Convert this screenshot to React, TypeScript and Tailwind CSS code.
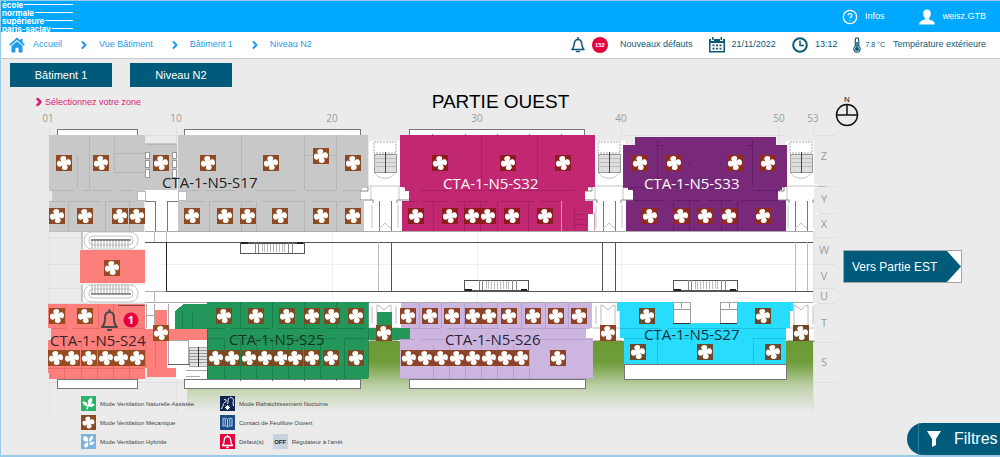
import React from 'react'
import { ChevronRight, CircleHelp } from 'lucide-react'

type Point = [number, number]

type Zone = {
  name: string
  fill: string
  wall: string
  ink: string
  label: Point
  areas: string[]
  walls: string
  fan: string
  fans: Point[]
}

// spreads one row of fans along x
const row = (y: number, xs: number[]): Point[] => xs.map((x) => [x, y])

const ZONES: Zone[] = [
  {
    name: 'CTA-1-N5-S17',
    fill: '#c8c8c8',
    wall: '#adadad',
    ink: '#222222',
    label: [162, 188],
    areas: [
      'M49 135H145V143H177V190H145V191H137V201H144V231H49V201H52V190H49Z',
      'M178 135H368V187H362V190H360V200H364V231H178V201H186V190H178Z',
    ],
    walls:
      'M89 136V190M114 136V172M114 153H145M114 172H145M77 155V188M49 190H75M82 190H112M120 190H134M49 201H65M69 201H100M108 201H135M68 201V231M105 201V231M129 201V231M178 190H198M205 190H236M255 190H295M306 190H335M343 190H362M186 201H205M212 201H254M262 201H303M312 201H352M209 201V231M241 135V190M241 201V231M256 201V231M304 135V190M304 201V231M336 135V190M336 201V231M304 155H336M178 231H364M49 231H144M146 144H177',
    fan: '#8d4a24',
    fans: [
      ...row(163, [64, 101, 161, 208, 271, 353]),
      [321, 156],
      ...row(216, [57, 85, 120, 137, 192, 225, 248, 280, 321, 353]),
    ],
  },
  {
    name: 'CTA-1-N5-S32',
    fill: '#c22771',
    wall: '#9e1a5b',
    ink: '#ffffff',
    label: [443, 189],
    areas: ['M400 135H595V187H588V191H585V201H593V214H588V231H402V201H409V191H405V187H400Z'],
    walls:
      'M481 135V190M537 135V190M420 190H450M458 190H510M518 190H575M402 201H418M423 201H450M458 201H490M500 201H535M541 201H560M433 201V231M464 201V231M480 201V231M497 201V231M528 201V231M432 134V137M465 134V137M497 134V137M529 134V137M561 134V137M574 207V231M574 214H586M574 219H586M574 224H586',
    fan: '#8e1c1f',
    fans: [...row(163, [440, 508, 563]), ...row(216, [416, 450, 472, 488, 512, 545])],
  },
  {
    name: 'CTA-1-N5-S33',
    fill: '#79297a',
    wall: '#5b1a5e',
    ink: '#ffffff',
    label: [644, 189],
    areas: ['M635 137H776V145H787V187H782V190H778V201H786V231H626V201H633V190H628V187H623V145H635Z'],
    walls:
      'M657 140V186M657 145H664M752 140V186M752 145H747M623 187H650M660 187H690M700 187H740M752 190H780M626 200H665M673 200H700M707 200H733M741 200H786M673 200V231M689 200V231M721 200V231M737 200V231M689 163V166M721 163V166',
    fan: '#8e2a1e',
    fans: [...row(163, [640, 674, 735, 768]), ...row(216, [650, 681, 705, 729, 763])],
  },
  {
    name: 'CTA-1-N5-S24',
    fill: '#fc7f7c',
    wall: '#e06462',
    ink: '#3a2424',
    label: [50, 346],
    areas: [
      'M80 250H145V283H80Z',
      'M48 304H145V329H155V310H167V329H208V340H167V368H176V377H147V368H145V379H49V373H48V340H51V328H48Z',
    ],
    walls:
      'M65 304V328M98 304V328M113 304V328M51 328H66M72 328H100M107 328H145M64 343V379M81 343V379M97 343V379M113 343V379M129 343V379M145 340V368M155 340V368M48 368H145',
    fan: '#964b20',
    fans: [
      [112, 268],
      ...row(316, [57, 85]),
      [161, 333],
      ...row(358, [56, 72, 89, 106, 121, 137]),
    ],
  },
  {
    name: 'CTA-1-N5-S25',
    fill: '#23975a',
    wall: '#147343',
    ink: '#163224',
    label: [229, 345],
    areas: ['M175 311L184 304H207V302H368V328H377V312H392V328H410V340H368V379H207V329H175Z'],
    walls:
      'M240 302V328M272 302V328M304 302V328M336 302V328M207 328H225M231 328H270M277 328H320M327 328H366M207 338H225M233 338H275M290 338H335M343 338H366M224 340V378M240 340V378M256 340V378M272 340V378M288 340V378M304 340V378M320 340V378M344 340V378M207 328V378M368 302V378M182 311V328M192 311V328M240 378V381M272 378V381M304 378V381M336 378V381',
    fan: '#7c4a22',
    fans: [
      ...row(316, [224, 256, 287, 312, 332, 356]),
      ...row(358, [216, 232, 249, 265, 281, 295, 312, 331, 356]),
      [384, 333],
    ],
  },
  {
    name: 'CTA-1-N5-S26',
    fill: '#ccb6e0',
    wall: '#ad97c3',
    ink: '#2b2433',
    label: [445, 345],
    areas: ['M401 303H592V328H586V338H593V379H400V339H410V328H401Z'],
    walls:
      'M419 303V328M441 303V328M464 303V328M481 303V328M497 303V328M521 303V328M545 303V328M568 303V328M410 328H440M447 328H500M508 328H590M400 339H415M421 339H445M540 339H593M433 345V378M449 345V378M465 345V378M481 345V378M497 345V378M513 345V378M529 345V378M400 378H593',
    fan: '#8d4327',
    fans: [
      ...row(316, [408, 430, 452, 473, 489, 509, 533, 556, 579]),
      ...row(358, [409, 425, 441, 457, 473, 489, 505, 521, 558]),
      [608, 333],
    ],
  },
  {
    name: 'CTA-1-N5-S27',
    fill: '#28dcfd',
    wall: '#14b4d6',
    ink: '#14313a',
    label: [644, 340],
    areas: ['M617 302H673V323H737V302H793V311H790V328H786V364H624V338H620V311H617Z'],
    walls: 'M620 328H660M668 328H786M624 338H690M700 338H735M657 340V364M753 340V364M752 338H786',
    fan: '#6b4a2c',
    fans: [...row(316, [647, 763]), ...row(352, [638, 705, 773]), [801, 333]],
  },
]

const COLUMNS: [string, number][] = [
  ['01', 48],
  ['10', 176],
  ['20', 332],
  ['30', 477],
  ['40', 621],
  ['50', 779],
  ['53', 813],
]

const ROWS: [string, number][] = [
  ['Z', 160],
  ['Y', 203],
  ['X', 228],
  ['W', 254],
  ['V', 280],
  ['U', 300],
  ['T', 327],
  ['S', 366],
]

const BLADE = 'M0 .5C-1.600 -1 -4 -2.200 -3.700 -4.700C-3.400 -7 .2 -7.800 1.700 -6.300C3 -5 1.300 -3.400 1.500 -1.500Z'

const Fan = ({ x, y, fill }: { x: number; y: number; fill: string }) => (
  <g transform={`translate(${x} ${y})`}>
    <rect x="-8" y="-8" width="16" height="16" fill={fill} />
    {[0, 90, 180, 270].map((angle) => (
      <path key={angle} d={BLADE} transform={`rotate(${angle})`} fill="#fff" />
    ))}
  </g>
)

// white lift and stair block between two zones of the north wing
const NorthCore = ({ x }: { x: number }) => (
  <g transform={`translate(${x} 0)`} stroke="#c4c4c4" fill="none">
    <path d="M-16 135H16V187H26V200H18V231H-18V200H-26V187H-16Z" fill="#fff" stroke="none" />
    <path d="M-16 135H16V141H-16Z" fill="#ebebeb" stroke="none" />
    <rect x="-11" y="142" width="22" height="11" stroke="#aaa" strokeDasharray="2 1" />
    <path d="M-11 154H11V172H-11Z" fill="#dedede" stroke="#999" shapeRendering="crispEdges" />
    <path d="M-11 158H11M-11 162H11M-11 166H11" stroke="#bbb" shapeRendering="crispEdges" />
    <path d="M0 152V173" stroke="#444" shapeRendering="crispEdges" />
    <path d="M-10 173A11 9 0 0 0 10 173M-16 186H16M-14 187V200M14 187V200" />
    <path d="M-24 187H-17V191H-25V200H-12V203M17 187H24V191H25V200H12V203" stroke="#888" />
    <path d="M-6 201V231M6 201V231" stroke="#777" shapeRendering="crispEdges" />
    <path d="M-6 228Q-2 226 0 223Q2 226 6 228M-13 205V228M13 205V228" />
  </g>
)

const SouthCore = ({ x }: { x: number }) => (
  <g transform={`translate(${x} 0)`} fill="none" stroke="#bbb">
    <path d="M-16 303H16V341H-16Z" fill="#fff" stroke="none" />
    <path d="M-7 305V328M7 305V328M-12 306V324M12 306V324M-7 305Q-3 306 0 310Q3 306 7 305M-15 328H15" />
    <path d="M-14 341H-8M8 341H14" stroke="#777" />
  </g>
)

const Escalator = ({ x, y, flip = false }: { x: number; y: number; flip?: boolean }) => (
  <g transform={`translate(${x} ${y})`} fill="none">
    <rect width="64" height="10" fill="#fff" stroke="#555" />
    <path d="M15 0V10M18 0V10M48 0V10M52 0V10" stroke="#888" />
    <path d="M22 1V9M24 1V9M27 1V9M30 1V9M33 1V9M36 1V9M39 1V9M42 1V9M44 1V9" stroke="#bbb" />
    <path d={flip ? 'M1 0H8M57 0H63' : 'M1 10H8M57 10H63'} stroke="#222" strokeWidth="2" />
  </g>
)

const WestStair = ({ y, dark }: { y: number; dark: number }) => (
  <g fill="none" stroke="#c4c4c4">
    <path d={`M82 ${y}V${y + 17}H145V${y}Z`} fill="#fff" stroke="none" />
    <rect x="84" y={y} width="54" height="17" rx="8" />
    <rect x="89" y={y + 4} width="44" height="9" rx="4" />
    <path
      d="M92 0V9M95 0V9M98 0V9M101 0V9M104 0V9M107 0V9M110 0V9M113 0V9M116 0V9M119 0V9M122 0V9M125 0V9M128 0V9"
      transform={`translate(0 ${dark > y + 8 ? y : y + 7})`}
      stroke="#aaa"
    />
    <path d={`M91 ${dark}H131`} stroke="#333" />
    <path d={`M82 ${y}V${y + 17}`} stroke="#999" />
  </g>
)

const FloorPlan = () => (
  <svg
    viewBox="1 112 835 300"
    className="block w-full"
    role="img"
    aria-label="Plan du niveau N2, partie ouest"
    fontFamily="'Open Sans', 'Noto Sans', sans-serif"
  >
    <defs>
      <linearGradient id="garden" x1="0" y1="0" x2="0" y2="1">
        <stop offset="0" stopColor="#6b9a33" />
        <stop offset=".3" stopColor="#6f9d3b" />
        <stop offset=".65" stopColor="#c0d2ab" />
        <stop offset="1" stopColor="#ebebeb" />
      </linearGradient>
    </defs>

    <g shapeRendering="crispEdges">
      <path
        d="M49 127V412M176 127V412M332 127V412M477 127V412M621 127V412M779 127V412M813 127V412M48 135H836M48 186H836M48 213H836M48 237H836M48 264H836M48 288H836M48 303H836M48 342H836M48 382H836"
        stroke="#e0e0e0"
      />
      <rect x="187" y="341" width="626" height="71" fill="url(#garden)" />

      {/* atrium slab between both wings */}
      <path d="M145 187H813V303H145Z M145 303H813V340H145Z" fill="#fff" />
      <path d="M158 264H813M332 231V303M477 231V303M621 242V303" stroke="#efefef" />
      <path d="M145 231H813" stroke="#aaa" />
      <path d="M145 242H813M166 291H813" stroke="#555" />
      <path d="M145 291H166M145 302H813" stroke="#aaa" />
      <path d="M166 242V291" stroke="#222" />
      <path d="M602 242V291M615 242V291M391 242V291" stroke="#555" />
      <path d="M378 242V291M795 242V291M807 242V291M154 231V242M154 291V303M166 231V242" stroke="#bbb" />

      {/* balconies */}
      <path
        d="M57 129H137V135H57ZM184 129H360V135H184ZM409 129H584V135H409ZM57 379H137V388H57ZM184 379H360V388H184ZM409 379H585V388H409ZM624 364H786V379H624Z"
        fill="#fff"
        stroke="#777"
      />
    </g>

    <NorthCore x={385} />
    <NorthCore x={609} />
    <NorthCore x={801} />
    <rect x="814" y="138" width="22" height="46" fill="#ebebeb" />
    <rect x="814" y="187" width="22" height="26" fill="#ebebeb" />
    <rect x="814" y="214" width="22" height="22" fill="#ebebeb" />
    <SouthCore x={384} />
    <SouthCore x={608} />
    <SouthCore x={801} />
    <rect x="814" y="304" width="22" height="37" fill="#ebebeb" />
    <WestStair y={232} dark={240} />
    <WestStair y={285} dark={294} />

    {/* stair tower of the south-west corner */}
    <g fill="none" stroke="#aaa" shapeRendering="crispEdges">
      <path d="M145 303H208V379H176V368H167V340H145Z" fill="#fff" stroke="none" />
      <path d="M146 304V328M154 304V328M146 315H154M168 304V328M168 340H188V364H168Z" />
      <path d="M189 347H198V366H189ZM198 347H207V366H198Z" fill="#e2e2e2" />
      <path d="M189 350H207M189 353H207M189 356H207M189 359H207M189 362H207" stroke="#999" />
      <path d="M198 347V367" stroke="#333" />
      <path d="M168 364H190" stroke="#666" />
      <path d="M186 370H207M186 376H200" />
    </g>

    {ZONES.map((zone) => (
      <g key={zone.name}>
        {zone.areas.map((area) => (
          <path key={area} d={area} fill={zone.fill} shapeRendering="crispEdges" />
        ))}
        <path d={zone.walls} fill="none" stroke={zone.wall} strokeWidth="1" opacity=".7" shapeRendering="crispEdges" />
      </g>
    ))}

    {/* lifts and doors cut out of the zones */}
    <g fill="#fff" stroke="#999" shapeRendering="crispEdges">
      <path d="M137 191H186V200H178V231H145V200H137Z" stroke="none" />
      <path d="M137 191H145V200H137ZM178 191H186V200H178Z" stroke="#bbb" />
      <path d="M155 201V231M167 201V231M145 201H155M167 201H178" fill="none" stroke="#777" />
      <path d="M145 152H149V158H145ZM145 160H149V167H145ZM145 169H149V177H145ZM172 152H176V158H172ZM172 160H176V167H172ZM172 169H176V177H172Z" />
      <path d="M673 303V323H690V303M673 309H690M681 303V308M720 303V323H737V303M720 309H737M729 303V308" />
      <path d="M691 302H720V323H691Z" stroke="none" />
      <path d="M561 201V231M594 213V231" stroke="#c9a0b4" />
      <path d="M673 323H690M720 323H737" stroke="#333" />
      <path d="M118 305H145" stroke="#7a4a4a" />
    </g>

    <g shapeRendering="crispEdges">
      <Escalator x={240} y={243} flip />
      <Escalator x={464} y={280} />
      <Escalator x={673} y={280} />
    </g>

    {ZONES.map((zone) => (
      <g key={zone.name}>
        {zone.fans.map(([x, y]) => (
          <Fan key={`${x}-${y}`} x={x} y={y} fill={zone.fan} />
        ))}
        <text x={zone.label[0]} y={zone.label[1]} fontSize="15" fill={zone.ink}>
          {zone.name}
        </text>
      </g>
    ))}

    <g stroke="#4a4a4a" strokeWidth="2" fill="none" strokeLinejoin="round" strokeLinecap="round">
      <path d="M102 327H117C115 325 114 323 114 318C114 314 112 312 109.500 312C107 312 105 314 105 318C105 323 104 325 102 327Z" />
      <path d="M109.500 310V312M108 330H111" />
    </g>
    <circle cx="131" cy="320" r="7.500" fill="#e3003c" />
    <text x="131" y="324" fontSize="11" fontWeight="700" fill="#fff" textAnchor="middle">
      1
    </text>

    <g fontSize="10" fill="#9b9b9b" textAnchor="middle">
      {COLUMNS.map(([label, x]) => (
        <text key={label} x={x} y="122">
          {label}
        </text>
      ))}
      {ROWS.map(([label, y]) => (
        <text key={label} x="824" y={y} fontSize="11">
          {label}
        </text>
      ))}
    </g>
  </svg>
)

const BellIcon = ({ className }: { className?: string }) => (
  <svg viewBox="0 0 16 16" className={className} fill="none" stroke="currentColor" strokeWidth="1.500" strokeLinejoin="round" aria-hidden="true">
    <path d="M2 12.500C3.800 11 4 9 4.300 6.500C4.600 4 6 2.500 8 2.500S11.400 4 11.700 6.500C12 9 12.200 11 14 12.500Z" />
    <path d="M8 .5V2.500M6.500 14.500H9.500" strokeLinecap="round" />
  </svg>
)

const HomeIcon = () => (
  <svg viewBox="0 0 16 16" className="size-4" fill="currentColor" aria-hidden="true">
    <path d="M8 .6L.2 7.600L1.300 8.800L8 3L14.700 8.800L15.800 7.600L13.600 5.600V2H11.400V3.600Z" />
    <path d="M8 4.300L2.500 9.100V15.400H6.400V10.800H9.600V15.400H13.500V9.100Z" />
  </svg>
)

const UserIcon = () => (
  <svg viewBox="0 0 16 16" className="size-4" fill="currentColor" aria-hidden="true">
    <path d="M8 .5C10.600 .5 12 2.300 11.800 4.800C11.700 6.800 10.900 8.400 9.900 9.200V10.600C12.300 11.300 15.800 12.200 15.800 15.500H.2C.2 12.200 3.700 11.300 6.100 10.600V9.200C5.100 8.400 4.300 6.800 4.200 4.800C4 2.300 5.400 .5 8 .5Z" />
  </svg>
)

const CalendarIcon = () => (
  <svg viewBox="0 0 16 16" className="size-4" aria-hidden="true">
    <path fill="currentColor" fillRule="evenodd" d="M0 2H2V4H5V2H11V4H14V2H16V15.500H0ZM1.500 6V14H14.500V6Z" />
    <path fill="currentColor" d="M3 0H4.500V3H3ZM11.500 0H13V3H11.500ZM3.500 7.500H5.500V9.300H3.500ZM7 7.500H9V9.300H7ZM10.500 7.500H12.500V9.300H10.500ZM3.500 10.700H5.500V12.500H3.500ZM7 10.700H9V12.500H7ZM10.500 10.700H12.500V12.500H10.500Z" />
  </svg>
)

const ClockIcon = () => (
  <svg viewBox="0 0 16 16" className="size-4" fill="none" stroke="currentColor" strokeWidth="2" aria-hidden="true">
    <circle cx="8" cy="8" r="6.800" />
    <path d="M8 3.500V8.500H12" strokeWidth="1.500" />
  </svg>
)

const ThermometerIcon = () => (
  <svg viewBox="0 0 8 16" className="h-4 w-2" fill="none" stroke="currentColor" aria-hidden="true">
    <path d="M2.300 9.300V2.500A1.700 1.700 0 0 1 5.700 2.500V9.300A3.200 3.200 0 1 1 2.300 9.300Z" strokeWidth="1.200" />
    <circle cx="4" cy="12" r="2" fill="currentColor" stroke="none" />
    <path d="M4 5V12" strokeWidth="1.500" />
  </svg>
)

const Logo = () => (
  <div className="flex w-[72px] flex-col pl-px font-['Inter',sans-serif] text-[8px] leading-[8px] font-bold text-white">
    {['école', 'normale', 'supérieure', 'paris-saclay'].map((word) => (
      <span key={word} className="flex items-center gap-px">
        {word}
        <span className="h-px flex-1 bg-white" />
      </span>
    ))}
  </div>
)

const LegendItem = ({ color, label, children }: { color: string; label: string; children: React.ReactNode }) => (
  <li className="flex items-center gap-1">
    <svg viewBox="0 0 15 15" className="size-[15px] shrink-0" aria-hidden="true">
      <rect width="15" height="15" fill={color} />
      {children}
    </svg>
    {label}
  </li>
)

const Legend = () => (
  <div className="relative -mt-4 ml-20 grid grid-cols-[139px_auto] justify-start pb-1.5 text-[6px] leading-[8px] text-[#444]">
    <ul className="flex flex-col gap-1">
      <LegendItem color="#2cb568" label="Mode Ventilation Naturelle Assistée">
        <path
          fill="#fff"
          d="M5.500 13.500C5.300 11.500 6 9.700 7.300 8.300C6 5.500 7.500 2.800 10.500 1.500C12 4.200 11.300 6.500 9 7.800C10.500 7.200 12.300 7.300 13.800 8.500C12.300 11 9.800 11.700 7.500 10.300L6.700 13.500ZM6 10C3.500 10 1.700 8.300 1.500 5.500C4.300 5 6.500 6.800 6.500 9.300Z"
        />
      </LegendItem>
      <LegendItem color="#8d4a24" label="Mode Ventilation Mécanique">
        {[0, 90, 180, 270].map((angle) => (
          <path key={angle} d={BLADE} transform={`translate(7.500 7.500) scale(.85) rotate(${angle})`} fill="#fff" />
        ))}
      </LegendItem>
      <LegendItem color="#7fb2dc" label="Mode Ventilation Hybride">
        <path
          fill="#fff"
          d="M7 7.500C4.500 8 2 7 2 4.500C2 2.500 4.500 1.500 6 3C7 4 7 5.500 7 7.500ZM7 8.500C7.500 10.500 7 13.500 5 13.500C3 13.500 2.500 11 4 9.700C5 9 6 8.700 7 8.500ZM8 7.500C7.500 5 9 2.500 11.500 1.500C12.500 4 11.500 6.500 9 7.500ZM8.500 9C10 7.500 12 7.500 13.500 8.500C12.500 10.500 10.500 11.500 8.500 10.500Z"
        />
      </LegendItem>
    </ul>
    <ul className="flex flex-col gap-1">
      <LegendItem color="#0d2453" label="Mode Rafraichissement Nocturne">
        <path
          fill="none"
          stroke="#fff"
          d="M1.500 13C2 10.500 3.500 10 3.500 7.500M4 4C5 2.500 6 3 6 5C6 6 5 7 4 6.500M9 2C7.500 3.500 8.500 6 7.500 8M10 1.500C13.500 1.500 14 4 13 6.500L13.500 10M7.500 9V14M5 11.500H10M5.700 9.700L9.300 13.300M9.300 9.700L5.700 13.300"
        />
      </LegendItem>
      <LegendItem color="#1d4c84" label="Contact de Feuillure Ouvert">
        <path
          fill="none"
          stroke="#b9d2ea"
          d="M3 3.500C5 3 6.500 3.500 7.500 4.500C8.500 3.500 10 3 12 3.500V11C10 10.500 8.500 11 7.500 12C6.500 11 5 10.500 3 11ZM7.500 4.500V12M5.200 4V10.500M9.800 4V10.500"
        />
      </LegendItem>
      <li>
        <ul className="flex gap-[9px]">
          <LegendItem color="#e3003c" label="Défaut(s)">
            <path
              fill="none"
              stroke="#fff"
              strokeWidth="1.300"
              strokeLinejoin="round"
              d="M2.500 11.500C4 10.200 4 8.500 4.200 6.500C4.400 4 5.700 2.500 7.500 2.500S10.600 4 10.800 6.500C11 8.500 11 10.200 12.500 11.500ZM7.500 1V2.500M6.300 13.500H8.700"
            />
          </LegendItem>
          <li className="flex items-center gap-1">
            <span className="flex size-[15px] items-center justify-center bg-[#c9d3df] font-bold text-[#222]">OFF</span>
            Régulateur à l'arrêt
          </li>
        </ul>
      </li>
    </ul>
  </div>
)

const CRUMBS = ['Accueil', 'Vue Bâtiment', 'Bâtiment 1', 'Niveau N2']

const App = () => {
  return (
    <div className="flex min-h-screen flex-col overflow-hidden border-t border-b-2 border-l border-[#9cc9e6] bg-[#ebebeb] font-['Liberation_Sans',Arial,sans-serif]">
      <header className="flex h-[31px] items-center justify-between bg-[#00a8ff] pr-3.5 text-[9px] text-white">
        <Logo />
        <div className="flex items-center gap-[35px]">
          <a href="#infos" className="flex items-center gap-[7px]">
            <CircleHelp className="size-4" strokeWidth={2} />
            Infos
          </a>
          <a href="#compte" className="flex items-center gap-[7px]">
            <UserIcon />
            weisz.GTB
          </a>
        </div>
      </header>

      <div className="flex h-[27px] items-center justify-between border-b border-[#c8c8c8] bg-white pr-3.5 pl-2 text-[9px] whitespace-nowrap text-[#0d5a76]">
        <nav aria-label="Fil d'Ariane">
          <ol className="flex items-center text-[#1e9be6]">
            {CRUMBS.map((crumb, i) => (
              <li key={crumb} className="flex items-center">
                {i > 0 && <ChevronRight className="mr-[9px] ml-4 size-3" strokeWidth={4} />}
                <a href="#" className="flex items-center gap-2">
                  {i === 0 && <HomeIcon />}
                  {crumb}
                </a>
              </li>
            ))}
          </ol>
        </nav>
        <div className="flex items-center gap-4">
          <a href="#defauts" className="flex items-center gap-1.5">
            <BellIcon className="size-4" />
            <span className="flex size-4 items-center justify-center rounded-full bg-[#e3003c] text-[6px] font-bold text-white">
              152
            </span>
            <span className="pl-1.5">Nouveaux défauts</span>
          </a>
          <span className="flex items-center gap-[7px]">
            <CalendarIcon />
            21/11/2022
          </span>
          <span className="flex items-center gap-[7px]">
            <ClockIcon />
            13:12
          </span>
          <span className="flex items-center gap-1">
            <ThermometerIcon />
            <span className="text-[7px]">7.8 °C</span>
            <span className="pl-1">Température extérieure</span>
          </span>
        </div>
      </div>

      <div className="flex gap-[18px] pt-1 pl-[9px] text-[11px] text-white">
        <button type="button" className="h-6 w-[102px] bg-[#005b7a]">
          Bâtiment 1
        </button>
        <button type="button" className="h-6 w-[102px] bg-[#005b7a]">
          Niveau N2
        </button>
      </div>

      <div className="grid grid-cols-[1fr_auto_1fr] pt-1 leading-[21px]">
        <p className="flex items-center pl-8 text-[9px] leading-[18px] text-[#d4237a]">
          <ChevronRight className="size-3" strokeWidth={5} />
          Sélectionnez votre zone
        </p>
        <h1 className="text-[19px] text-black">PARTIE OUEST</h1>
      </div>

      <main className="grid flex-1 grid-cols-[minmax(0,1fr)_164px]">
        <div>
          <FloorPlan />
          <Legend />
        </div>
        <aside className="flex flex-col items-start">
          <svg viewBox="0 0 22 32" className="-mt-[17px] h-8 w-[22px] overflow-visible" role="img" aria-label="Nord">
            <text x="11" y="7" fontSize="8" textAnchor="middle" fill="#111">
              N
            </text>
            <g fill="none" stroke="#111" strokeWidth="1.500">
              <circle cx="11" cy="20" r="10.500" />
              <path d="M.5 20H21.500M11 9.500V20" />
            </g>
          </svg>
          <button type="button" className="mt-[123px] ml-[7px] h-[33px] w-[119px] border border-[#a5a5a5] bg-white text-[12px] text-white">
            <span className="flex h-full items-center bg-[#005b7a] pl-2 [clip-path:polygon(0_0,88%_0,100%_50%,88%_100%,0_100%)]">
              Vers Partie EST
            </span>
          </button>
          <button
            type="button"
            className="mt-auto flex h-8 w-[93px] items-center self-end rounded-l-full bg-[#005b7a] pl-[11px] text-[16px] text-white"
          >
            <span className="flex h-full items-center gap-[13px] border-l border-[#2f7b95] pl-2">
              <svg viewBox="0 0 14 16" className="h-4 w-3.5" fill="currentColor" aria-hidden="true">
                <path d="M0 0H14L9 8V14L5 16V8Z" />
              </svg>
              Filtres
            </span>
          </button>
        </aside>
      </main>
    </div>
  )
}

export default App
